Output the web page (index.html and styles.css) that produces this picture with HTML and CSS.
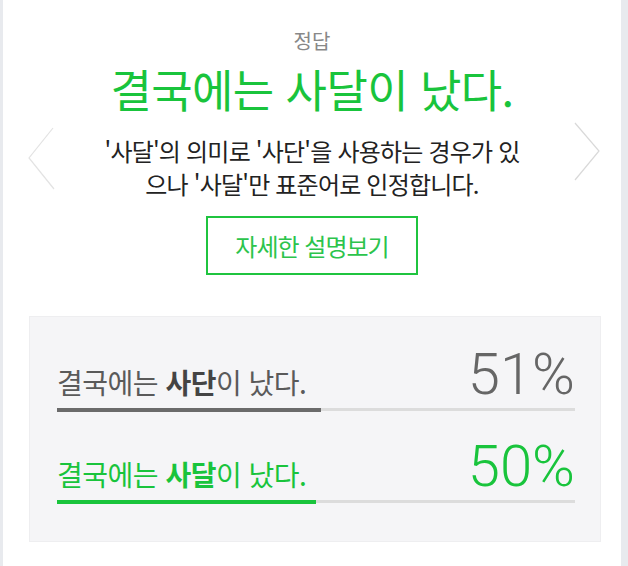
FILE: index.html
```html
<!DOCTYPE html>
<html lang="ko">
<head>
    <meta charset="UTF-8">
    <meta name="viewport" content="width=device-width, initial-scale=1.0">
    <title>정답</title>
    <link rel="stylesheet" href="styles.css">
</head>
<body>
    <div class="card">
        <svg class="nav nav-prev" width="30" height="66" viewBox="0 0 30 66">
            <polyline points="25,2 1,32 26,63" fill="none" stroke="#e3e3e3" stroke-width="1.2"/>
        </svg>
        <svg class="nav nav-next" width="30" height="62" viewBox="0 0 30 62">
            <polyline points="2,1 26,29 2,58" fill="none" stroke="#d9d9d9" stroke-width="1.2"/>
        </svg>

        <div class="answer-label">정답</div>
        <h1 class="answer">결국에는 사달이 났다.</h1>
        <p class="desc">'사달'의 의미로 '사단'을 사용하는 경우가 있<br>으나 '사달'만 표준어로 인정합니다.</p>
        <a class="more-btn" href="#">자세한 설명보기</a>

        <div class="stats">
            <div class="stat">
                <div class="stat-line">
                    <span class="stat-text">결국에는 <b>사단</b>이 났다.</span>
                    <span class="stat-pct">51%</span>
                </div>
                <div class="track"><div class="fill" style="width: 51%"></div></div>
            </div>
            <div class="stat correct">
                <div class="stat-line">
                    <span class="stat-text">결국에는 <b>사달</b>이 났다.</span>
                    <span class="stat-pct">50%</span>
                </div>
                <div class="track"><div class="fill" style="width: 50%"></div></div>
            </div>
        </div>
    </div>
</body>
</html>
```

FILE: styles.css
```css
* {
    margin: 0;
    padding: 0;
    box-sizing: border-box;
}

body {
    background-color: #e8eaee;
    font-family: 'Noto Sans CJK KR', 'Noto Sans', sans-serif;
    color: #222;
}

.card {
    position: relative;
    width: 618px;
    min-height: 566px;
    margin-left: 3px;
    padding-top: 27px;
    background-color: #ffffff;
    display: flex;
    flex-direction: column;
    align-items: center;
}

.nav {
    position: absolute;
}

.nav-prev {
    left: 25px;
    top: 126px;
}

.nav-next {
    left: 570px;
    top: 122px;
}

.answer-label {
    font-size: 20px;
    line-height: 28px;
    color: #888888;
}

.answer {
    margin-top: 8px;
    font-size: 45px;
    line-height: 52px;
    font-weight: normal;
    color: #19c43c;
    letter-spacing: -0.6px;
}

.desc {
    margin-top: 19px;
    font-size: 24px;
    line-height: 33px;
    letter-spacing: -0.8px;
    text-align: center;
    color: #222222;
}

.more-btn {
    margin-top: 16px;
    width: 212px;
    height: 59px;
    display: flex;
    justify-content: center;
    align-items: center;
    border: 2px solid #1fc43f;
    font-size: 24px;
    letter-spacing: -1px;
    color: #2cc44c;
    text-decoration: none;
}

.stats {
    align-self: flex-start;
    margin: 41px 0 0 26px;
    width: 572px;
    padding: 28px 25px 37px 27px;
    background-color: #f5f5f7;
    border: 1px solid #eeeef0;
}

.stat + .stat {
    margin-top: 25px;
}

.stat-line {
    display: flex;
    justify-content: space-between;
    align-items: baseline;
}

.stat-text {
    font-size: 28px;
    color: #5a5a5a;
    letter-spacing: -0.5px;
}

.stat-text b {
    color: #444444;
}

.stat-pct {
    font-family: 'Roboto', 'Liberation Sans', sans-serif;
    font-weight: 300;
    font-size: 58px;
    line-height: 58px;
    color: #666666;
}

.track {
    margin-top: 5px;
    height: 4px;
    background: linear-gradient(#dcdcdc, #dcdcdc) 0 0 / 100% 3px no-repeat;
}

.fill {
    height: 4px;
    background-color: #6b6b6b;
}

.correct .stat-text,
.correct .stat-text b,
.correct .stat-pct {
    color: #19c43c;
}

.correct .fill {
    background-color: #19c43c;
}
```
